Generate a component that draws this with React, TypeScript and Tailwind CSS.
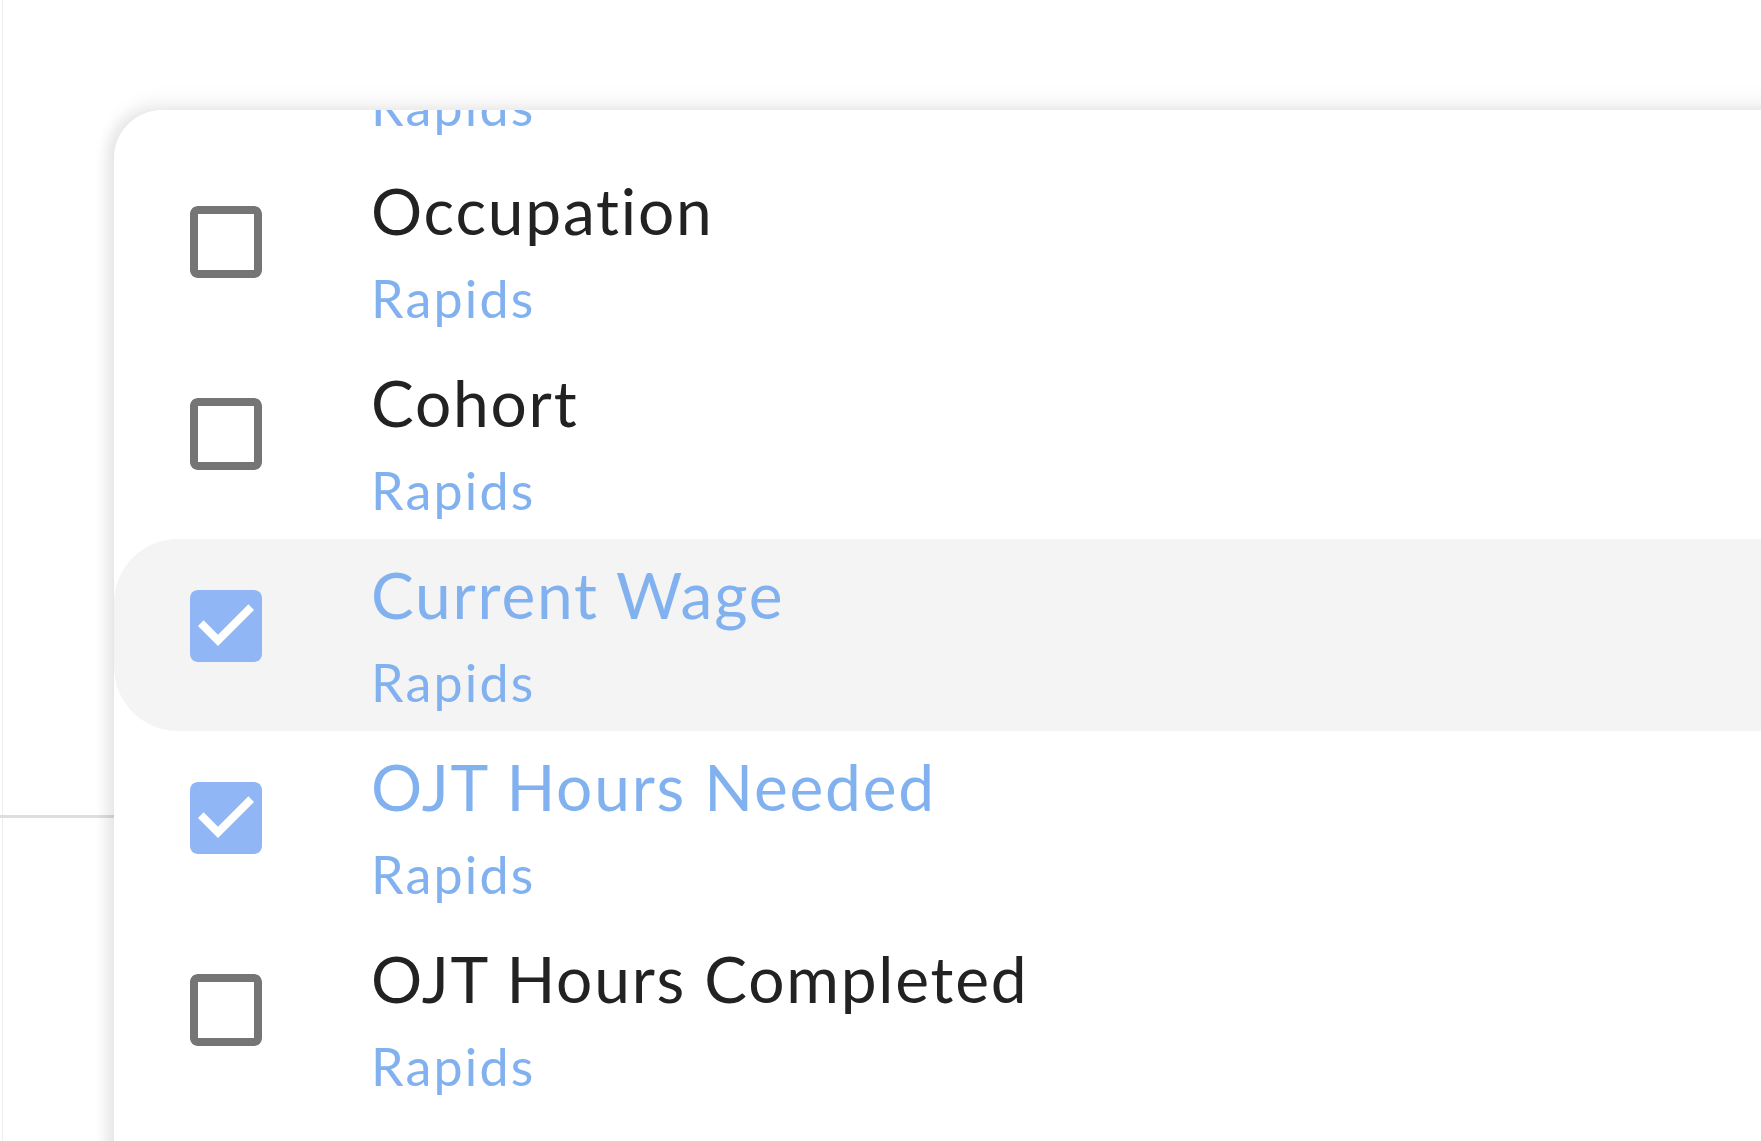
import React from "react";

type Item = { title: string; source: string; checked: boolean; highlighted?: boolean };

const items: Item[] = [
  { title: "Employer", source: "Rapids", checked: false },
  { title: "Occupation", source: "Rapids", checked: false },
  { title: "Cohort", source: "Rapids", checked: false },
  { title: "Current Wage", source: "Rapids", checked: true, highlighted: true },
  { title: "OJT Hours Needed", source: "Rapids", checked: true },
  { title: "OJT Hours Completed", source: "Rapids", checked: false },
  { title: "Start Date", source: "Rapids", checked: false },
];

function CheckIcon({ checked }: { checked: boolean }) {
  if (checked) {
    return (
      <svg viewBox="0 0 24 24" className="w-[96px] h-[96px]" aria-hidden>
        <path
          fill="#91b6f5"
          d="M19 3H5c-1.11 0-2 .9-2 2v14c0 1.1.89 2 2 2h14c1.11 0 2-.9 2-2V5c0-1.1-.89-2-2-2z"
        />
        <path fill="#ffffff" d="M10 17l-5-5 1.41-1.41L10 14.17l7.59-7.59L19 8l-9 9z" />
      </svg>
    );
  }
  return (
    <svg viewBox="0 0 24 24" className="w-[96px] h-[96px]" aria-hidden>
      <path
        fill="#757575"
        d="M19 5v14H5V5h14m0-2H5c-1.1 0-2 .9-2 2v14c0 1.1.9 2 2 2h14c1.1 0 2-.9 2-2V5c0-1.1-.9-2-2-2z"
      />
    </svg>
  );
}

function Row({ item }: { item: Item }) {
  return (
    <div
      className={
        "flex h-[192px] items-start rounded-l-[64px] " +
        (item.highlighted ? "bg-[#f4f4f4]" : "bg-transparent")
      }
    >
      <div className="ml-[64px] mt-[39px] shrink-0">
        <CheckIcon checked={item.checked} />
      </div>
      <div className="ml-[97px] pt-[8px] flex flex-col [font-variant-ligatures:none]">
        <span
          className={
            "text-[64px] leading-[96px] tracking-[1.8px] whitespace-nowrap " +
            (item.checked ? "text-[#82b1ef]" : "text-[#222222]")
          }
        >
          {item.title}
        </span>
        <span className="text-[52px] leading-[78px] tracking-[2.2px] text-[#82b1ef] whitespace-nowrap">
          {item.source}
        </span>
      </div>
    </div>
  );
}

export default function App() {
  return (
    <div
      className="relative w-[1761px] h-[1141px] overflow-hidden bg-white"
      style={{ fontFamily: "Lato, 'Open Sans', sans-serif" }}
    >
      {/* underlying page lines */}
      <div className="absolute left-[2px] top-0 bottom-0 w-px bg-[#eeeeee]" />
      <div className="absolute left-0 top-[815px] w-[114px] h-[3px] bg-[#dedede]" />

      {/* menu panel */}
      <div className="absolute left-[114px] top-[110px] w-[1800px] h-[1200px] bg-white rounded-tl-[48px] overflow-hidden shadow-[0_-10px_20px_rgba(30,40,60,0.05),-8px_0_14px_rgba(0,0,0,0.08)]">
        <div className="mt-[-147px] flex flex-col">
          {items.map((it, i) => (
            <Row key={i} item={it} />
          ))}
        </div>
      </div>
    </div>
  );
}
